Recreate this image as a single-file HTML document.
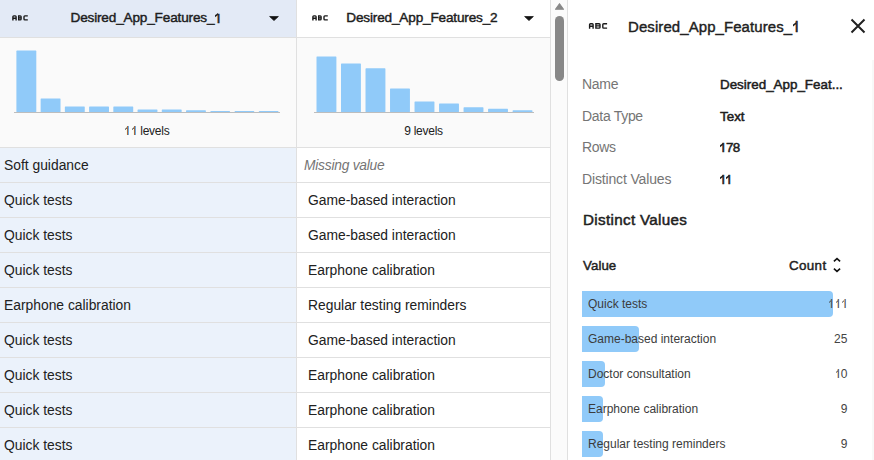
<!DOCTYPE html>
<html><head><meta charset="utf-8">
<style>
html,body{margin:0;padding:0;}
body{width:874px;height:460px;overflow:hidden;position:relative;background:#fff;font-family:"Liberation Sans",sans-serif;color:#212121;}
.a{position:absolute;}
.hl{position:absolute;height:1px;background:#e0e0e0;}
.vl{position:absolute;width:1px;background:#e0e0e0;}
.t{position:absolute;white-space:nowrap;line-height:20px;}
.hdr{font-size:13.6px;letter-spacing:-0.17px;-webkit-text-stroke:0.42px #1c1c1c;color:#212121;}
.cell{font-size:13.85px;color:#212121;}
.miss{font-size:13.8px;letter-spacing:-0.24px;font-style:italic;color:#757575;}
.lvl{font-size:12px;letter-spacing:-0.26px;color:#212121;}
.bar{position:absolute;background:#90caf9;border-radius:1px 1px 0 0;}
.lab{font-size:14px;letter-spacing:-0.3px;color:#757575;}
.val{font-size:13.4px;-webkit-text-stroke:0.5px #1c1c1c;color:#212121;}
.li{font-size:12px;letter-spacing:0px;color:#3c3c3c;}
.lb{position:absolute;left:582px;height:26px;background:#90caf9;border-radius:0 4px 4px 0;}
.cnt{--c:#444;font-size:12px;letter-spacing:0.1px;color:#444;text-align:right;}
.one{position:relative;color:transparent !important;-webkit-text-stroke:0 !important;}
.one::before{content:"l";position:absolute;left:0.25em;top:0.07em;line-height:1.117em;color:var(--c,#212121);letter-spacing:0;}
.one::after{content:"";position:absolute;left:0.14em;top:0.26em;width:0.19em;height:0.1em;background:var(--c,#212121);transform:skewY(-40deg);transform-origin:100% 0;}
.one.b::before{-webkit-text-stroke:0.6px var(--c,#212121);left:0.19em;top:0.1em;}
.one.b::after{left:0.05em;width:0.22em;height:0.12em;top:0.28em;opacity:1;transform:skewY(-38deg);}
</style></head><body>
<!-- column 1 -->
<div class="a" style="left:0;top:0;width:296px;height:37px;background:#e3eaf6"></div>
<div class="a" style="left:0;top:38px;width:296px;height:109px;background:#fafafa"></div>
<div class="a" style="left:0;top:148px;width:296px;height:312px;background:#ebf2fb"></div>
<!-- column 2 -->
<div class="a" style="left:297px;top:38px;width:253px;height:109px;background:#fafafa"></div>
<!-- scrollbar track -->
<div class="a" style="left:551px;top:0;width:16px;height:460px;background:#fbfbfb"></div>
<div class="vl" style="left:296px;top:0;height:460px"></div>
<div class="vl" style="left:550px;top:0;height:460px"></div>
<div class="vl" style="left:567px;top:0;height:460px"></div>
<div class="hl" style="left:0;top:37px;width:551px"></div>
<div class="hl" style="left:0;top:147px;width:551px"></div>
<div class="hl" style="left:0;top:182px;width:551px"></div>
<div class="hl" style="left:0;top:217px;width:551px"></div>
<div class="hl" style="left:0;top:252px;width:551px"></div>
<div class="hl" style="left:0;top:287px;width:551px"></div>
<div class="hl" style="left:0;top:322px;width:551px"></div>
<div class="hl" style="left:0;top:357px;width:551px"></div>
<div class="hl" style="left:0;top:392px;width:551px"></div>
<div class="hl" style="left:0;top:427px;width:551px"></div>

<!-- scrollbar -->
<svg class="a" style="left:551px;top:0" width="16" height="100" viewBox="0 0 16 100">
<path d="M8.5 3.7 L12.5 9.2 L4.5 9.2 Z" fill="#888" stroke="#888" stroke-width="1.1" stroke-linejoin="round"/>
<rect x="4" y="16" width="9" height="65" rx="4.5" fill="#888"/>
</svg>

<!-- header icons -->
<svg class="a" style="left:10px;top:13px" width="24" height="10" viewBox="10 13 24 10"><path d="M12.90 20.60 V16.80 Q12.90 15.90 13.80 15.90 H15.20 Q16.10 15.90 16.10 16.80 V20.60 M12.90 18.30 H16.10 M18.70 15.90 H20.20 Q21.10 15.90 21.10 16.80 V19.00 Q21.10 19.90 20.20 19.90 H18.70 Z M18.70 17.90 H21.10 M27.80 15.90 H24.90 Q24.00 15.90 24.00 16.80 V19.00 Q24.00 19.90 24.90 19.90 H27.80" fill="none" stroke="#1a1a1a" stroke-width="1.4"/></svg>
<div class="t hdr" style="left:70.5px;top:7.5px">Desired_App_Features_<span class="one b">1</span></div>
<svg class="a" style="left:268px;top:15px" width="12" height="7" viewBox="0 0 12 7">
<path d="M1.6 1.5 H10.4 L6 5.6 Z" fill="#111" stroke="#111" stroke-width="0.7" stroke-linejoin="round"/></svg>

<svg class="a" style="left:310px;top:13px" width="24" height="10" viewBox="310 13 24 10"><path d="M312.90 20.60 V16.80 Q312.90 15.90 313.80 15.90 H315.20 Q316.10 15.90 316.10 16.80 V20.60 M312.90 18.30 H316.10 M318.70 15.90 H320.20 Q321.10 15.90 321.10 16.80 V19.00 Q321.10 19.90 320.20 19.90 H318.70 Z M318.70 17.90 H321.10 M327.80 15.90 H324.90 Q324.00 15.90 324.00 16.80 V19.00 Q324.00 19.90 324.90 19.90 H327.80" fill="none" stroke="#1a1a1a" stroke-width="1.4"/></svg>
<div class="t hdr" style="left:346.3px;top:7.5px">Desired_App_Features_2</div>
<svg class="a" style="left:522.5px;top:15px" width="12" height="7" viewBox="0 0 12 7">
<path d="M1.6 1.5 H10.4 L6 5.6 Z" fill="#111" stroke="#111" stroke-width="0.7" stroke-linejoin="round"/></svg>

<!-- histogram 1 -->
<svg class="a" style="left:0;top:38px" width="296" height="109" viewBox="0 38 296 109"><g fill="#90caf9"><rect x="16.40" y="50.60" width="19.9" height="61.40" rx="0.6"/><rect x="40.63" y="98.40" width="19.9" height="13.60" rx="0.6"/><rect x="64.86" y="106.40" width="19.9" height="5.60" rx="0.6"/><rect x="89.09" y="106.40" width="19.9" height="5.60" rx="0.6"/><rect x="113.32" y="106.40" width="19.9" height="5.60" rx="0.6"/><rect x="137.55" y="109.40" width="19.9" height="2.60" rx="0.6"/><rect x="161.78" y="109.40" width="19.9" height="2.60" rx="0.6"/><rect x="186.01" y="110.30" width="19.9" height="1.70" rx="0.6"/><rect x="210.24" y="111.10" width="19.9" height="0.90" rx="0.6"/><rect x="234.47" y="111.10" width="19.9" height="0.90" rx="0.6"/><rect x="258.70" y="111.10" width="19.9" height="0.90" rx="0.6"/></g><rect x="14" y="112" width="266" height="1" fill="#bdbdbd"/></svg>
<div class="t lvl" style="left:0;width:293px;text-align:center;top:121px"><span style="letter-spacing:0.1px"><span class="one">1</span><span class="one">1</span></span> levels</div>

<!-- histogram 2 -->
<svg class="a" style="left:297px;top:38px" width="253" height="109" viewBox="297 38 253 109"><g fill="#90caf9"><rect x="316.50" y="56.50" width="19.9" height="55.50" rx="0.6"/><rect x="341.01" y="63.40" width="19.9" height="48.60" rx="0.6"/><rect x="365.52" y="68.35" width="19.9" height="43.65" rx="0.6"/><rect x="390.03" y="88.50" width="19.9" height="23.50" rx="0.6"/><rect x="414.54" y="101.50" width="19.9" height="10.50" rx="0.6"/><rect x="439.05" y="103.60" width="19.9" height="8.40" rx="0.6"/><rect x="463.56" y="107.30" width="19.9" height="4.70" rx="0.6"/><rect x="488.07" y="108.70" width="19.9" height="3.30" rx="0.6"/><rect x="512.58" y="110.30" width="19.9" height="1.70" rx="0.6"/></g><rect x="314" y="112" width="220" height="1" fill="#bdbdbd"/></svg>
<div class="t lvl" style="left:297px;width:253px;text-align:center;top:121px">9 levels</div>

<!-- rows col1 -->
<div class="t cell" style="left:4px;top:155px">Soft guidance</div>
<div class="t cell" style="left:4px;top:190px">Quick tests</div>
<div class="t cell" style="left:4px;top:225px">Quick tests</div>
<div class="t cell" style="left:4px;top:260px">Quick tests</div>
<div class="t cell" style="left:4px;top:295px">Earphone calibration</div>
<div class="t cell" style="left:4px;top:330px">Quick tests</div>
<div class="t cell" style="left:4px;top:365px">Quick tests</div>
<div class="t cell" style="left:4px;top:400px">Quick tests</div>
<div class="t cell" style="left:4px;top:435px">Quick tests</div>
<!-- rows col2 -->
<div class="t miss" style="left:304px;top:155.5px">Missing value</div>
<div class="t cell" style="left:308px;top:190px">Game-based interaction</div>
<div class="t cell" style="left:308px;top:225px">Game-based interaction</div>
<div class="t cell" style="left:308px;top:260px">Earphone calibration</div>
<div class="t cell" style="left:308px;top:295px">Regular testing reminders</div>
<div class="t cell" style="left:308px;top:330px">Game-based interaction</div>
<div class="t cell" style="left:308px;top:365px">Earphone calibration</div>
<div class="t cell" style="left:308px;top:400px">Earphone calibration</div>
<div class="t cell" style="left:308px;top:435px">Earphone calibration</div>

<!-- panel -->
<div class="a" style="left:872px;top:60px;width:2px;height:400px;background:#f8f8f8"></div>
<svg class="a" style="left:586px;top:21px" width="24" height="10" viewBox="586 21 24 10"><path d="M589.60 28.80 V24.60 Q589.60 23.70 590.50 23.70 H592.20 Q593.10 23.70 593.10 24.60 V28.80 M589.60 26.30 H593.10 M595.90 23.70 H599.10 Q600.00 23.70 600.00 24.60 V27.20 Q600.00 28.10 599.10 28.10 H595.90 Z M595.90 25.90 H600.00 M607.10 23.70 H603.70 Q602.80 23.70 602.80 24.60 V27.20 Q602.80 28.10 603.70 28.10 H607.10" fill="none" stroke="#1a1a1a" stroke-width="1.4"/></svg>
<div class="t" style="left:628px;top:16.5px;font-size:14.96px;letter-spacing:0.1px;-webkit-text-stroke:0.4px #212121">Desired_App_Features_<span class="one b">1</span></div>
<svg class="a" style="left:848px;top:16px" width="20" height="20" viewBox="0 0 20 20">
<path d="M3.5 3.5 L16.5 16.5 M16.5 3.5 L3.5 16.5" stroke="#212121" stroke-width="2" fill="none"/></svg>

<div class="t lab" style="left:582px;top:73.5px">Name</div>
<div class="t val" style="left:720px;top:74.5px">Desired_App_Feat...</div>
<div class="t lab" style="left:582px;top:105.5px">Data Type</div>
<div class="t val" style="left:720px;top:106.5px">Text</div>
<div class="t lab" style="left:582px;top:136.5px">Rows</div>
<div class="t val" style="left:719.2px;top:137.5px;letter-spacing:-0.7px"><span class="one b">1</span>78</div>
<div class="t lab" style="left:582px;top:168.5px;letter-spacing:-0.15px">Distinct Values</div>
<div class="t val" style="left:719.2px;top:169.5px;letter-spacing:-1.5px"><span class="one b">1</span><span class="one b">1</span></div>

<div class="t" style="left:583px;top:209.5px;font-size:15.2px;letter-spacing:0.33px;-webkit-text-stroke:0.5px #212121">Distinct Values</div>
<div class="t" style="left:583px;top:255.5px;font-size:13.3px;letter-spacing:0.05px;-webkit-text-stroke:0.45px #212121">Value</div>
<div class="t" style="left:789px;top:256px;font-size:13.4px;letter-spacing:0.35px;-webkit-text-stroke:0.45px #212121">Count</div>
<svg class="a" style="left:831px;top:256px" width="12" height="18" viewBox="0 0 12 18">
<path d="M2.9 5.4 L6 2.6 L9.1 5.4 M2.9 12.6 L6 15.4 L9.1 12.6" stroke="#111" stroke-width="1.6" fill="none"/></svg>

<div class="lb" style="top:291px;width:251px"></div>
<div class="lb" style="top:326px;width:57px"></div>
<div class="lb" style="top:361px;width:22.6px"></div>
<div class="lb" style="top:396px;width:20.5px"></div>
<div class="lb" style="top:431px;width:20.5px"></div>
<div class="t li" style="left:588px;top:294px">Quick tests</div>
<div class="t li" style="left:588px;top:329px">Game-based interaction</div>
<div class="t li" style="left:588px;top:364px">Doctor consultation</div>
<div class="t li" style="left:588px;top:399px">Earphone calibration</div>
<div class="t li" style="left:588px;top:434px">Regular testing reminders</div>
<div class="t cnt" style="left:800.5px;width:47px;top:294px"><span class="one">1</span><span class="one">1</span><span class="one">1</span></div>
<div class="t cnt" style="left:800.5px;width:47px;top:329px">25</div>
<div class="t cnt" style="left:800.5px;width:47px;top:364px"><span class="one">1</span>0</div>
<div class="t cnt" style="left:800.5px;width:47px;top:399px">9</div>
<div class="t cnt" style="left:800.5px;width:47px;top:434px">9</div>
</body></html>
